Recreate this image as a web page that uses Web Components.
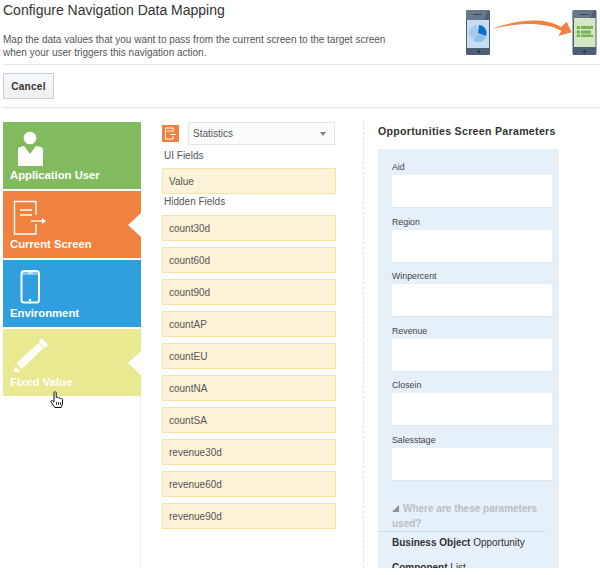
<!DOCTYPE html>
<html>
<head>
<meta charset="utf-8">
<title>Configure Navigation Data Mapping</title>
<style>
  html, body { margin: 0; background: #fff; }
  body { width: 600px; height: 575px; overflow: hidden; font-family: "Liberation Sans", Arial, sans-serif; color: #333; }
  .main { display: flex; height: 446px; padding-top: 14px; position: relative; }
</style>
</head>
<body>
<map-header></map-header>
<div class="main">
  <tile-column>
    <nav-tile label="Application User" color="#82bb5f" icon="user"></nav-tile>
    <nav-tile label="Current Screen" color="#ee823e" icon="screen" selected></nav-tile>
    <nav-tile label="Environment" color="#2f9fdd" icon="phone"></nav-tile>
    <nav-tile label="Fixed Value" color="#e9e991" icon="pencil" selected></nav-tile>
  </tile-column>
  <field-column>
    <section-label>UI Fields</section-label>
    <field-item style="margin-bottom:1px">Value</field-item>
    <section-label style="height:20px">Hidden Fields</section-label>
    <field-item spaced>count30d</field-item>
    <field-item spaced>count60d</field-item>
    <field-item spaced>count90d</field-item>
    <field-item spaced>countAP</field-item>
    <field-item spaced>countEU</field-item>
    <field-item spaced>countNA</field-item>
    <field-item spaced>countSA</field-item>
    <field-item spaced>revenue30d</field-item>
    <field-item spaced>revenue60d</field-item>
    <field-item spaced>revenue90d</field-item>
  </field-column>
  <param-column>
    <param-field label="Aid"></param-field>
    <param-field label="Region"></param-field>
    <param-field label="Winpercent"></param-field>
    <param-field label="Revenue"></param-field>
    <param-field label="Closein"></param-field>
    <param-field label="Salesstage"></param-field>
  </param-column>
  <hand-cursor></hand-cursor>
</div>

<template id="map-header-tpl">
  <style>
    :host { display: block; margin-left: 3px; height: 107px; border-bottom: 1px solid #dde3e8; }
    h1 { margin: 0; padding-top: 1px; font: normal 14px/18px "Liberation Sans", Arial, sans-serif; color: #333; }
    .top { display: flex; height: 64px; border-bottom: 1px solid #e3e8ec; }
    .copy { width: 400px; flex: none; }
    p { margin: 14px 0 0; font-size: 10px; line-height: 13px; color: #555; }
    .art { margin: 9px 0 0 63px; display: block; flex: none; }
    .bar { padding-top: 8px; }
    button { display: block; width: 51px; height: 26px; padding: 0; box-sizing: border-box; border: 1px solid #c9d1d8; background: linear-gradient(#f8f9fa, #edeff1); font: bold 10px "Liberation Sans", Arial, sans-serif; letter-spacing: .3px; color: #333; }
  </style>
  <div class="top">
    <div class="copy">
      <h1>Configure Navigation Data Mapping</h1>
      <p>Map the data values that you want to pass from the current screen to the target screen<br>when your user triggers this navigation action.</p>
    </div>
    <svg class="art" width="134" height="46" viewBox="0 0 134 46">
      <rect x="0" y="1" width="24" height="45" rx="1.5" fill="#4d5f72"/>
      <path d="M0 3 Q0 1 2 1 H22 L18 11 H0Z" fill="#66788a"/>
      <rect x="1" y="11" width="22" height="28" fill="#c6dcf3"/>
      <rect x="7" y="5" width="9" height="1" fill="#3c4b5a"/>
      <circle cx="13" cy="42.5" r="1.3" fill="#27333f"/>
      <path d="M12 24 L13 16 A8 8 0 0 1 20 27Z" fill="#0c6fc6"/>
      <path d="M12 24 L20 28 A8 8 0 0 1 7 31Z" fill="#8fc1ea"/>
      <path d="M12 24 L6 30 A8 8 0 0 1 11 16Z" fill="#a5cdee"/>
      <path d="M25.7 20 C45 13 75 6 95 18 L100.7 12.7 L105.7 23.3 L92.3 27 L95.5 22 C78 12 50 14 25.7 20Z" fill="#ee823e"/>
      <rect x="106.5" y="1" width="24" height="45" rx="1.5" fill="#4d5f72"/>
      <path d="M106.5 3 Q106.5 1 108.5 1 H128 L124 9 H106.5Z" fill="#66788a"/>
      <rect x="108" y="9" width="21.5" height="29" fill="#d3e7c5"/>
      <rect x="113.5" y="5" width="9" height="1" fill="#3c4b5a"/>
      <circle cx="118.5" cy="42.5" r="1.3" fill="#27333f"/>
      <g fill="#78b352"><rect x="110.7" y="17" width="3.3" height="3"/><rect x="115" y="17" width="12" height="3"/><rect x="110.7" y="21.5" width="3.3" height="3"/><rect x="115" y="21.5" width="10" height="3"/><rect x="110.7" y="25.5" width="3.3" height="2.5"/><rect x="115" y="25.5" width="12" height="2.5"/></g>
    </svg>
  </div>
  <div class="bar"><button>Cancel</button></div>
</template>

<template id="tile-column-tpl">
  <style>
    :host { display: flex; flex-direction: column; gap: 2px; width: 138px; margin-left: 3px; flex: none; position: relative; }
    :host::after { content: ""; position: absolute; top: 0; bottom: 0; left: 137px; width: 1px; background: #eceff1; }
  </style>
  <slot></slot>
</template>

<template id="nav-tile-tpl">
  <style>
    :host { display: block; height: 67px; position: relative; z-index: 1; }
    .box { height: 100%; box-sizing: border-box; padding: 8px 0 0 7px; display: flex; flex-direction: column; }
    .icon { height: 38px; display: block; }
    .label { font: bold 11.3px/14px "Liberation Sans", Arial, sans-serif; color: #fff; }
    .notch { display: none; position: absolute; right: 0; top: 22px; width: 0; height: 0; border: 12px solid transparent; border-right-color: #fff; border-left-width: 0; border-right-width: 13px; }
    :host([selected]) .notch { display: block; }
  </style>
  <div class="box">
    <span class="icon"></span>
    <span class="label"></span>
  </div>
  <span class="notch"></span>
</template>

<template id="field-column-tpl">
  <style>
    :host { display: block; width: 174px; margin-left: 21px; flex: none; }
    .picker { display: flex; align-items: center; height: 23px; gap: 9px; margin-bottom: 4px; }
    .badge { width: 17px; height: 17px; background: #ee823e; display: block; margin-top: -1px; }
    .select { width: 147px; height: 23px; box-sizing: border-box; border: 1px solid #e0e5ea; background: #fbfcfd; display: flex; align-items: center; justify-content: space-between; padding: 0 8px 0 4px; font-size: 10px; color: #555; }
    .arrow { width: 0; height: 0; border: 3.5px solid transparent; border-top: 4px solid #7a7f84; border-bottom: 0; }
  </style>
  <div class="picker">
    <svg class="badge" viewBox="0 0 17 17"><g fill="none" stroke="#fff" stroke-width="1"><path d="M11 7 V3 H3.5 V14 H11 V11"/><path d="M5 6 H9.5"/><path d="M8 9.5 H14"/></g></svg>
    <div class="select"><span>Statistics</span><span class="arrow"></span></div>
  </div>
  <slot></slot>
</template>

<template id="section-label-tpl">
  <style>
    :host { display: block; height: 19px; font-size: 10px; line-height: 13px; color: #555; padding-left: 2px; box-sizing: border-box; }
  </style>
  <slot></slot>
</template>

<template id="field-item-tpl">
  <style>
    :host { display: block; height: 26px; box-sizing: border-box; border: 1px solid #f8e3a5; background: #fdf3d9; font-size: 10px; line-height: 25px; color: #555; padding-left: 6px; }
    :host([spaced]) { margin-bottom: 6px; }
  </style>
  <slot></slot>
</template>

<template id="param-column-tpl">
  <style>
    :host { display: block; width: 196px; margin-left: 27px; padding-left: 14px; border-left: 1px dashed #e2e5e8; flex: none; position: relative; }
    h2 { margin: 0 0 11px; padding-top: 3px; font: bold 10.6px/13px "Liberation Sans", Arial, sans-serif; letter-spacing: .3px; color: #333; }
    .panel { width: 181px; height: 419px; overflow: hidden; background: #e5f0f9; box-sizing: border-box; padding: 13px 0 0 14px; }
    .usage { margin-top: 11.6px; width: 160px; font: bold 10px/15px "Liberation Sans", Arial, sans-serif; color: #bcc0c4; }
    .tri { display: inline-block; width: 0; height: 0; border-style: solid; border-width: 0 0 7px 7px; border-color: transparent transparent #8d9196 transparent; margin-right: 4px; }
    hr { margin: 0 0 0 -14px; height: 1px; border: 0; background: #d3dde5; width: 167px; }
    .row { font-size: 10px; line-height: 13px; color: #333; margin-top: 4px; }
    .row + .row { margin-top: 12px; }
  </style>
  <h2>Opportunities Screen Parameters</h2>
  <div class="panel">
    <slot></slot>
    <div class="usage"><span class="tri"></span>Where are these parameters used?</div>
    <hr>
    <div class="row"><b>Business Object</b> Opportunity</div>
    <div class="row"><b>Component</b> List</div>
  </div>
</template>

<template id="param-field-tpl">
  <style>
    :host { display: block; height: 54.5px; }
    label { display: block; font-size: 8.8px; line-height: 11px; color: #444; }
    .input { height: 33px; width: 160px; background: #fff; border-bottom: 1px solid #dfe6ec; box-sizing: border-box; margin-top: 2px; }
  </style>
  <label></label>
  <div class="input"></div>
</template>

<template id="hand-cursor-tpl">
  <style>
    :host { position: absolute; left: 50px; top: 283px; width: 14px; height: 18px; display: block; z-index: 5; }
  </style>
  <svg width="14" height="18" viewBox="0 0 14 18"><path d="M4 1.5 C4.5 .5 6 .5 6.2 1.5 V6.5 C7 6 8 6 8.3 7 C9 6.5 10 6.7 10.3 7.6 C11.2 7.3 12.5 7.7 12.5 9 V13 L11.2 16.5 H4.8 L1 11 C.5 10 1.5 9 2.5 9.8 L4 11 Z" fill="#fff" stroke="#111" stroke-width="1" stroke-linejoin="round"/><path d="M6.5 11 V14 M8.5 11 V14 M10.5 11 V14" stroke="#111" stroke-width=".8"/></svg>
</template>

<script>
  const tileIcons = {
    user: '<svg width="40" height="38" viewBox="0 0 40 38"><g fill="#fff"><circle cx="20" cy="8" r="6.3"/><path d="M8 19 Q8 17 14 16 L20 24 L26 16 Q33 17 33 19 V36 H8Z"/></g></svg>',
    screen: '<svg width="40" height="38" viewBox="0 0 40 38"><g fill="none" stroke="#fff"><path d="M26 16 V2.5 H4.5 V35 H26 V25" stroke-width="1.4"/><path d="M10 11 H22 M10 16 H22" stroke-width="1.3"/><path d="M21 22 H33" stroke-width="1.3"/></g><path d="M32 19 L36 22 L32 25Z" fill="#fff"/></svg>',
    phone: '<svg width="40" height="38" viewBox="0 0 40 38"><rect x="11.5" y="3" width="17.5" height="31.5" rx="2.5" fill="none" stroke="#fff" stroke-width="2"/><rect x="18" y="4.5" width="5" height="1" fill="#fff"/><circle cx="20" cy="32" r="1.3" fill="#fff"/><rect x="11.5" y="3" width="17.5" height="4" fill="#fff" opacity=".4"/></svg>',
    pencil: '<svg width="40" height="38" viewBox="0 0 40 38"><g fill="#fff"><path d="M6.7 26 L28.3 6.3 L33.3 11.3 L11.7 32Z"/><path d="M3.3 35.3 L5 29.7 L10.7 34.7Z"/></g><path d="M31.5 4.5 L35 8" stroke="#fff" stroke-width="5" stroke-linecap="round"/></svg>'
  };

  class MapElement extends HTMLElement {
    constructor() {
      super();
      const tpl = document.getElementById(this.constructor.tpl);
      this.attachShadow({ mode: "open" }).appendChild(tpl.content.cloneNode(true));
    }
  }

  class MapHeader extends MapElement { static tpl = "map-header-tpl"; }
  class TileColumn extends MapElement { static tpl = "tile-column-tpl"; }
  class FieldColumn extends MapElement { static tpl = "field-column-tpl"; }
  class SectionLabel extends MapElement { static tpl = "section-label-tpl"; }
  class FieldItem extends MapElement { static tpl = "field-item-tpl"; }
  class ParamColumn extends MapElement { static tpl = "param-column-tpl"; }
  class HandCursor extends MapElement { static tpl = "hand-cursor-tpl"; }

  class NavTile extends MapElement {
    static tpl = "nav-tile-tpl";
    connectedCallback() {
      this.shadowRoot.querySelector(".box").style.background = this.getAttribute("color");
      this.shadowRoot.querySelector(".label").textContent = this.getAttribute("label");
      this.shadowRoot.querySelector(".icon").innerHTML = tileIcons[this.getAttribute("icon")];
    }
  }

  class ParamField extends MapElement {
    static tpl = "param-field-tpl";
    connectedCallback() {
      this.shadowRoot.querySelector("label").textContent = this.getAttribute("label");
    }
  }

  customElements.define("map-header", MapHeader);
  customElements.define("tile-column", TileColumn);
  customElements.define("nav-tile", NavTile);
  customElements.define("field-column", FieldColumn);
  customElements.define("section-label", SectionLabel);
  customElements.define("field-item", FieldItem);
  customElements.define("param-column", ParamColumn);
  customElements.define("param-field", ParamField);
  customElements.define("hand-cursor", HandCursor);
</script>
</body>
</html>
